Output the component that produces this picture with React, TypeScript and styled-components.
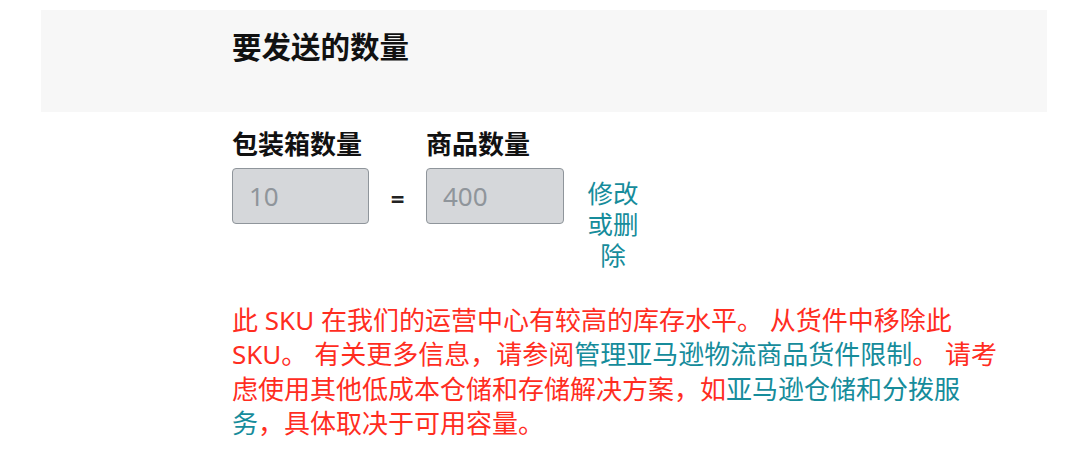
import styled, { createGlobalStyle } from 'styled-components';

const GlobalStyle = createGlobalStyle`
  html, body {
    margin: 0;
    padding: 0;
    background: #ffffff;
  }
  body {
    font-family: "Noto Sans", "Noto Sans CJK SC", sans-serif;
    color: #111111;
  }
`;

const Page = styled.div`
  width: 1080px;
  height: 475px;
  padding-top: 10px;
  box-sizing: border-box;
  overflow: hidden;
`;

const Banner = styled.div`
  margin-left: 41px;
  width: 1006px;
  height: 102px;
  background: #f7f7f7;
  box-sizing: border-box;
  padding: 19px 0 0 191px;
`;

const Heading = styled.h2`
  margin: 0;
  font-size: 29.5px;
  line-height: 36px;
  font-weight: 700;
  color: #111111;
`;

const Body = styled.div`
  padding: 15px 0 0 232px;
`;

const QuantityGrid = styled.div`
  display: grid;
  grid-template-columns: 137px 57px 138px 22px auto;
  grid-template-rows: auto auto;
  align-items: start;
`;

const Label = styled.div<{ $span?: number }>`
  grid-column: span ${(p) => p.$span ?? 1};
  font-size: 26px;
  line-height: 34px;
  font-weight: 700;
  color: #111111;
  margin-bottom: 7px;
`;

const Field = styled.div`
  height: 56px;
  box-sizing: border-box;
  border: 1.5px solid #8f959b;
  border-radius: 4px;
  background: #d5d7da;
  padding-left: 16px;
  display: flex;
  align-items: center;
  font-size: 26px;
  color: #8f959b;
`;

const Equals = styled.div`
  height: 56px;
  display: flex;
  align-items: center;
  justify-content: center;
  font-size: 24px;
  font-weight: 700;
  color: #222222;
  padding-top: 4px;
  box-sizing: border-box;
`;

const Spacer = styled.div``;

const EditLink = styled.a`
  display: block;
  width: 54px;
  margin-top: 10px;
  font-size: 25.5px;
  line-height: 31px;
  text-align: center;
  color: #168c9b;
  text-decoration: none;
  cursor: pointer;
`;

const Warning = styled.p`
  margin: 32px 0 0;
  width: 770px;
  font-size: 26px;
  line-height: 34.3px;
  color: #ff2d1f;
`;

const InlineLink = styled.a`
  color: #168c9b;
  text-decoration: none;
  cursor: pointer;
`;

export default function App() {
  return (
    <>
      <GlobalStyle />
      <Page>
        <Banner>
          <Heading>要发送的数量</Heading>
        </Banner>
        <Body>
          <QuantityGrid>
            <Label $span={2}>包装箱数量</Label>
            <Label $span={3}>商品数量</Label>
            <Field>10</Field>
            <Equals>=</Equals>
            <Field>400</Field>
            <Spacer />
            <EditLink>修改或删除</EditLink>
          </QuantityGrid>
          <Warning>
            此 SKU 在我们的运营中心有较高的库存水平。 从货件中移除此 SKU。 有关更多信息，请参阅
            <InlineLink>管理亚马逊物流商品货件限制</InlineLink>。 请考虑使用其他低成本仓储和存储解决方案，如
            <InlineLink>亚马逊仓储和分拨服务</InlineLink>，具体取决于可用容量。
          </Warning>
        </Body>
      </Page>
    </>
  );
}
